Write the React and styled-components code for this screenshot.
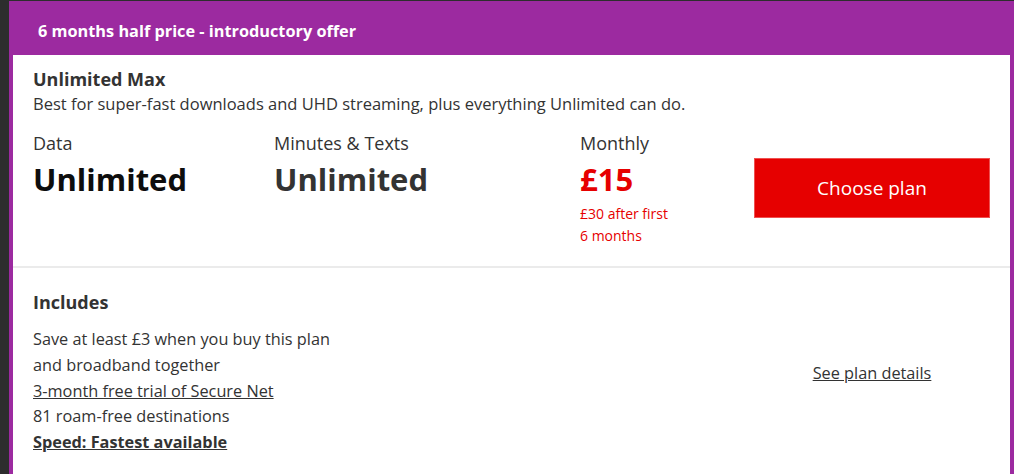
import React from "react";
import styled, { createGlobalStyle } from "styled-components";

const GlobalStyle = createGlobalStyle`
  html, body {
    margin: 0;
    padding: 0;
    background: #2d2d2d;
    overflow: hidden;
  }
  body {
    font-family: "Open Sans", "Liberation Sans", Arial, sans-serif;
    color: #333333;
  }
`;

const Page = styled.div`
  padding: 1px 0 0 9px;
  width: 1014px;
  height: 474px;
  box-sizing: border-box;
`;

const Card = styled.div`
  width: 1005px;
  background: #9c2aa0;
  padding: 0 4px;
  box-sizing: border-box;
  height: 520px;
`;

const Banner = styled.div`
  height: 54px;
  box-sizing: border-box;
  display: flex;
  align-items: center;
  padding: 5px 0 0 25px;
  color: #ffffff;
  font-size: 16.3px;
  font-weight: 700;
`;

const Body = styled.div`
  background: #ffffff;
  height: 100%;
`;

const Section = styled.div`
  padding: ${({ $pad }) => $pad};
  border-bottom: ${({ $divider }) => ($divider ? "2px solid #ebebeb" : "none")};
`;

const Title = styled.h2`
  margin: 0;
  font-size: 18px;
  line-height: 24px;
  font-weight: 700;
  color: #333333;
`;

const Description = styled.p`
  margin: 2px 0 0;
  font-size: 16.5px;
  line-height: 22px;
`;

const StatsRow = styled.div`
  display: flex;
  align-items: flex-start;
  margin-top: 16px;
`;

const Stat = styled.div`
  width: ${({ $width }) => $width};
  flex: ${({ $grow }) => ($grow ? 1 : "none")};
`;

const Label = styled.div`
  font-size: 18px;
  line-height: 24px;
  color: #333333;
`;

const Value = styled.div`
  font-size: 31px;
  line-height: 48px;
  font-weight: 700;
  color: ${({ $color }) => $color};
`;

const Note = styled.div`
  font-size: 14px;
  line-height: 22px;
  color: #e60000;
`;

const ChooseButton = styled.button`
  width: 236px;
  height: 60px;
  margin-top: 27px;
  border: 1px solid #ef5050;
  background: #e60000;
  color: #ffffff;
  font-family: inherit;
  font-size: 19px;
  cursor: pointer;
`;

const IncludesRow = styled.div`
  display: flex;
  align-items: center;
`;

const IncludesList = styled.ul`
  list-style: none;
  margin: 13px 0 0;
  padding: 0;
  font-size: 16.3px;
  line-height: 25.8px;
`;

const Item = styled.li`
  text-decoration: ${({ $link }) => ($link ? "underline" : "none")};
  font-weight: ${({ $bold }) => ($bold ? 700 : 400)};
`;

const DetailsLink = styled.a`
  width: 236px;
  text-align: center;
  font-size: 16.3px;
  color: #333333;
  text-decoration: underline;
  margin-left: auto;
`;

const includes = [
  { text: "Save at least £3 when you buy this plan" },
  { text: "and broadband together" },
  { text: "3-month free trial of Secure Net", link: true },
  { text: "81 roam-free destinations" },
  { text: "Speed: Fastest available", link: true, bold: true },
];

export default function App() {
  return (
    <>
      <GlobalStyle />
      <Page>
        <Card>
          <Banner>6 months half price - introductory offer</Banner>
          <Body>
            <Section $pad="12px 20px 19px" $divider>
              <Title>Unlimited Max</Title>
              <Description>
                Best for super-fast downloads and UHD streaming, plus everything
                Unlimited can do.
              </Description>
              <StatsRow>
                <Stat $width="241px">
                  <Label>Data</Label>
                  <Value $color="#0d0d0d">Unlimited</Value>
                </Stat>
                <Stat $width="306px">
                  <Label>Minutes &amp; Texts</Label>
                  <Value $color="#333333">Unlimited</Value>
                </Stat>
                <Stat $grow>
                  <Label>Monthly</Label>
                  <Value $color="#e60000">£15</Value>
                  <Note>£30 after first</Note>
                  <Note>6 months</Note>
                </Stat>
                <ChooseButton>Choose plan</ChooseButton>
              </StatsRow>
            </Section>
            <Section $pad="22px 20px 0">
              <IncludesRow>
                <div>
                  <Title>Includes</Title>
                  <IncludesList>
                    {includes.map((it) => (
                      <Item key={it.text} $link={it.link} $bold={it.bold}>
                        {it.text}
                      </Item>
                    ))}
                  </IncludesList>
                </div>
                <DetailsLink href="#">See plan details</DetailsLink>
              </IncludesRow>
            </Section>
          </Body>
        </Card>
      </Page>
    </>
  );
}
